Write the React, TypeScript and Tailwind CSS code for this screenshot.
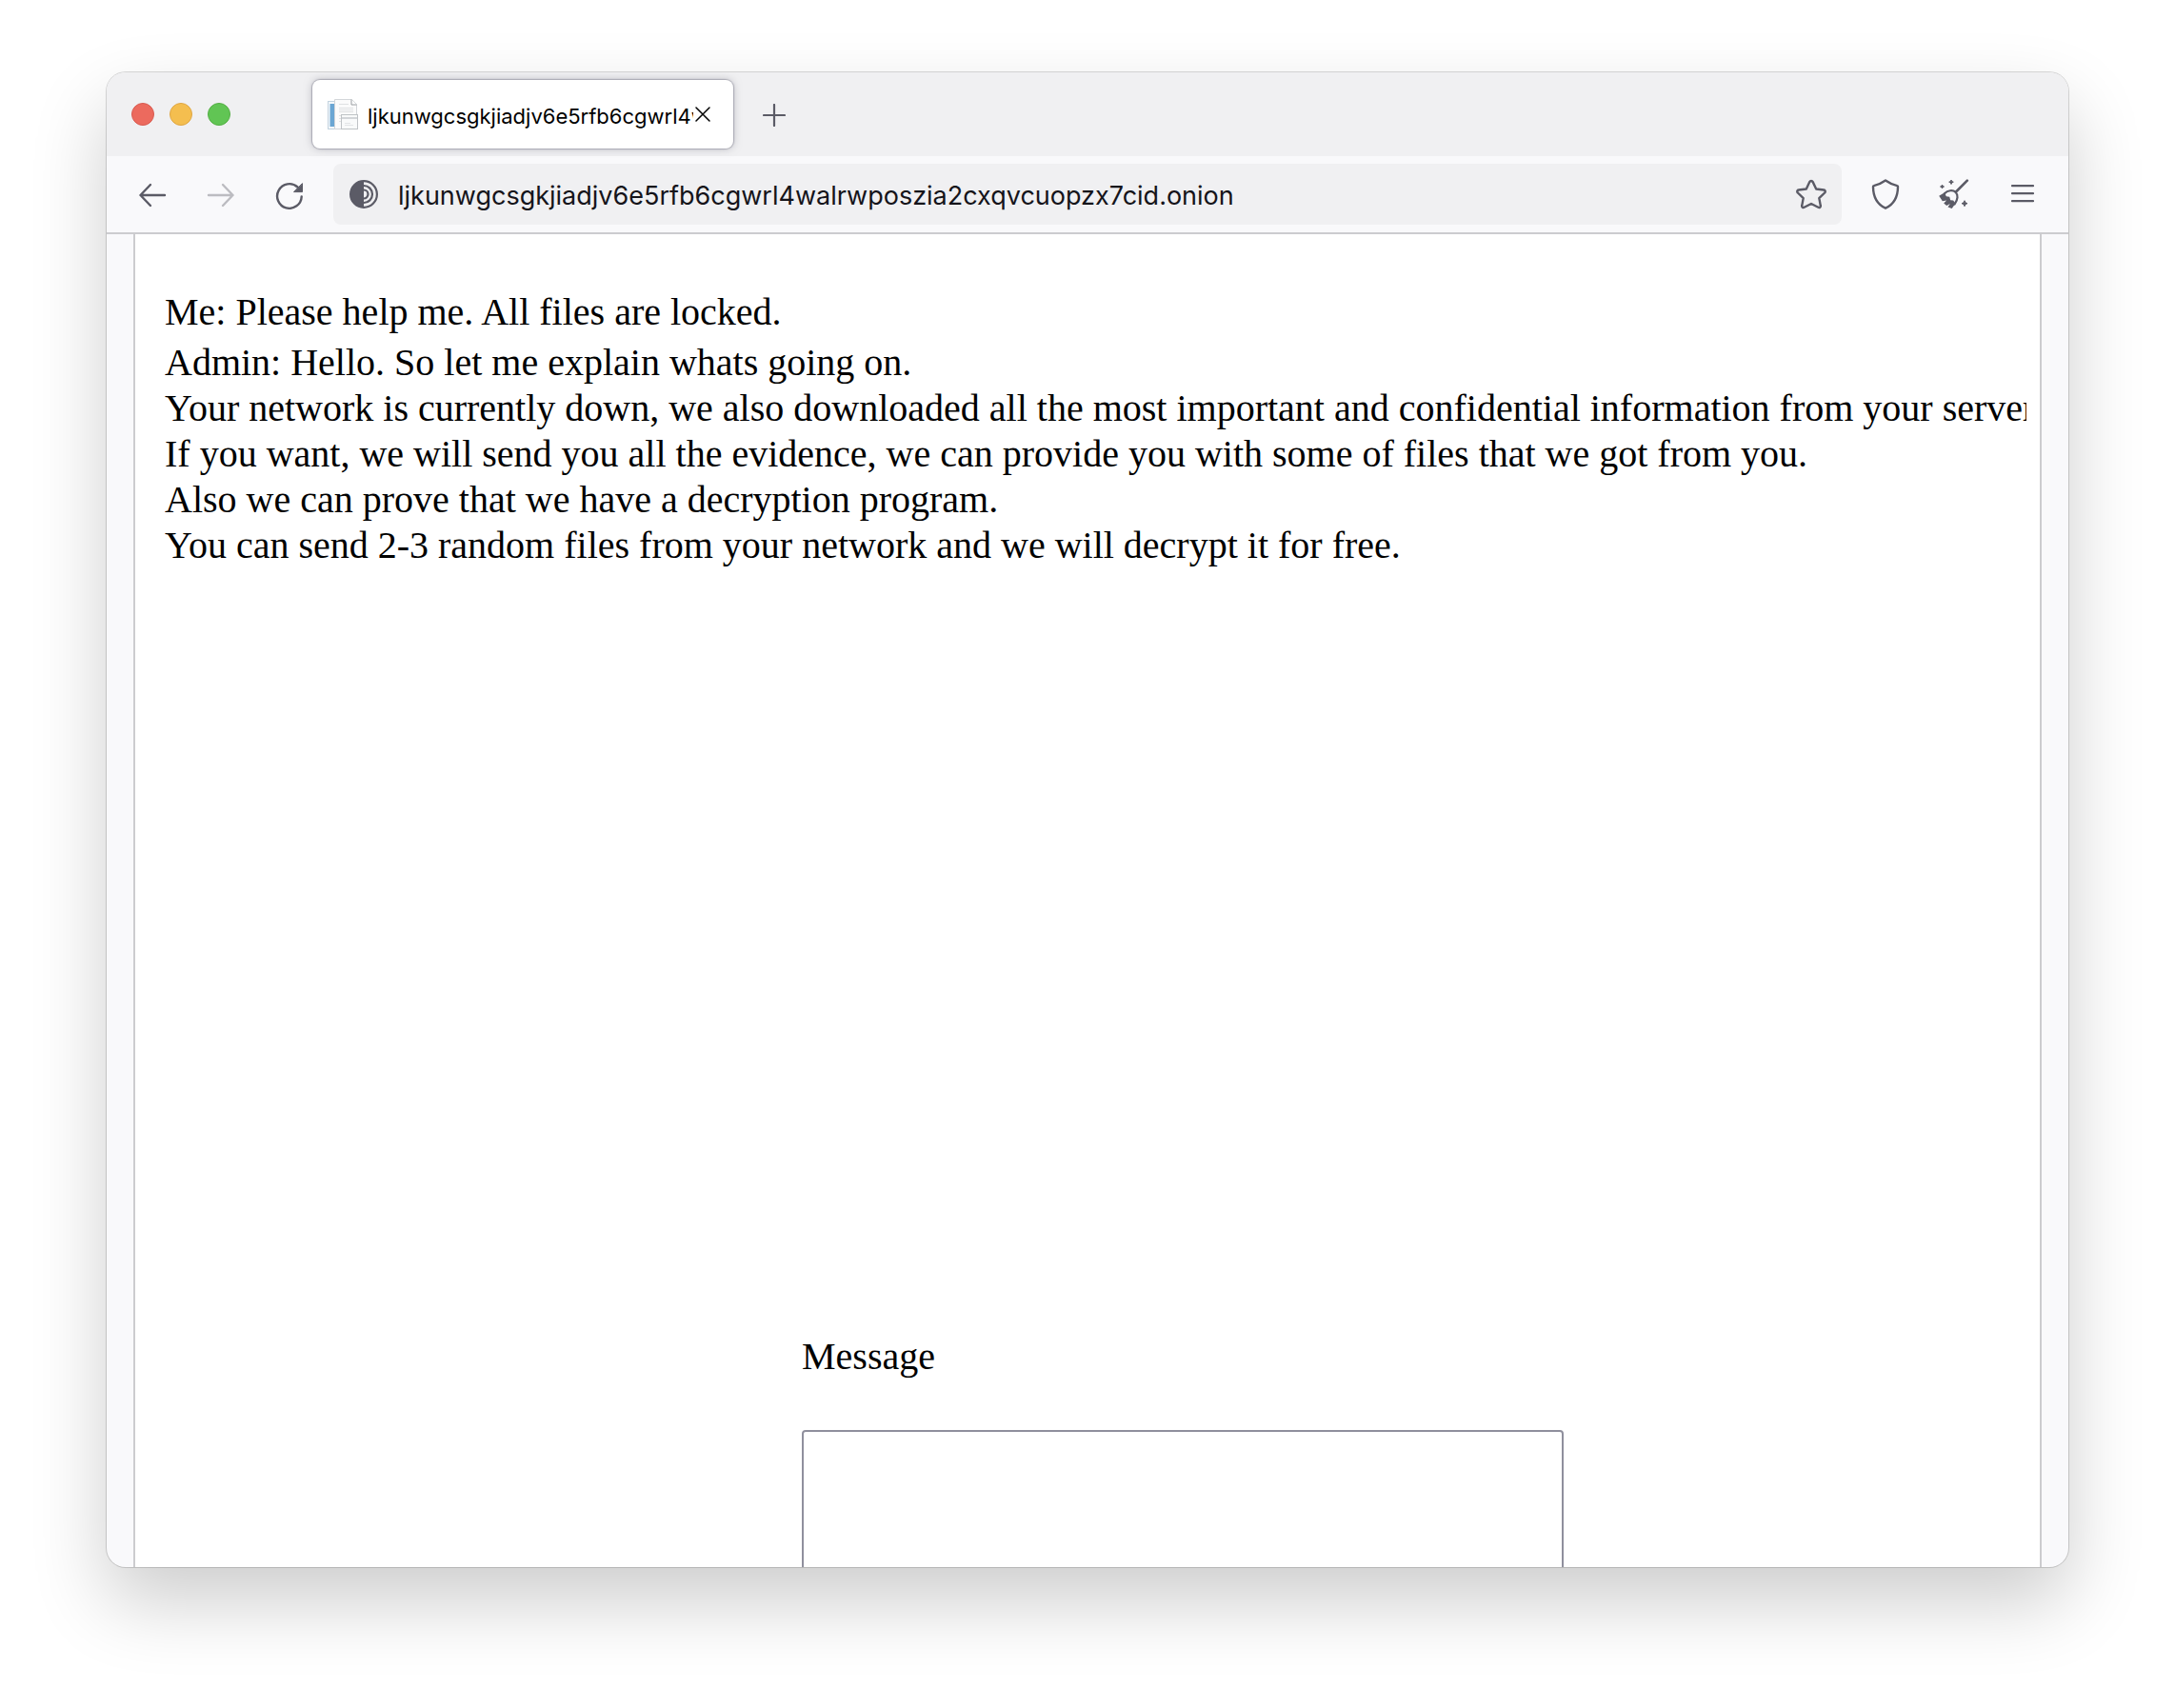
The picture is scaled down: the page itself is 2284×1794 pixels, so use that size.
const ADDRESS = "ljkunwgcsgkjiadjv6e5rfb6cgwrl4walrwposzia2cxqvcuopzx7cid.onion";

const ADMIN_LINES = [
  "Admin: Hello. So let me explain whats going on.",
  "Your network is currently down, we also downloaded all the most important and confidential information from your servers.",
  "If you want, we will send you all the evidence, we can provide you with some of files that we got from you.",
  "Also we can prove that we have a decryption program.",
  "You can send 2-3 random files from your network and we will decrypt it for free.",
];

const stroke = {
  fill: "none",
  stroke: "currentColor",
  strokeLinecap: "round",
  strokeLinejoin: "round",
} as const;

function BackIcon() {
  return (
    <svg className="size-8" viewBox="0 0 32 32" strokeWidth="2.4" {...stroke}>
      <path d="M29 17H3.500M14 6L3.500 17l10.500 11" />
    </svg>
  );
}

function ForwardIcon() {
  return (
    <svg className="size-8" viewBox="0 0 32 32" strokeWidth="2.4" {...stroke}>
      <path d="M3 17h25.500M18 6l10.500 11-10.500 11" />
    </svg>
  );
}

function ReloadIcon() {
  return (
    <svg className="size-8" viewBox="0 0 32 32" strokeWidth="2.400" {...stroke}>
      <path d="M28.700 18.500A12.800 12.800 0 1 1 24.500 8.500" />
      <path d="M29.500 5v8.600h-8.600z" fill="currentColor" strokeWidth="1" />
    </svg>
  );
}

function OnionIcon() {
  return (
    <svg className="size-8 shrink-0" viewBox="0 0 32 32" fill="none" stroke="currentColor" strokeWidth="2.2">
      <circle cx="16" cy="16" r="13.900" />
      <path d="M16 2a14 14 0 0 0 0 28z" fill="currentColor" stroke="none" />
      <path d="M16 7a9 9 0 0 1 0 18M16 11.500a4.500 4.500 0 0 1 0 9" />
    </svg>
  );
}

function StarIcon() {
  return (
    <svg className="size-8" viewBox="0 0 32 32" strokeWidth="2.4" {...stroke}>
      <path d="M14.300 3.100a1.900 1.900 0 0 1 3.400 0l3.500 7.400 8 1a1.700 1.700 0 0 1 .9 3l-5.800 5.600 1.500 8a1.600 1.600 0 0 1-2.400 1.700L16 26l-7.400 3.800a1.600 1.600 0 0 1-2.400-1.700l1.500-8-5.800-5.600a1.700 1.700 0 0 1 .9-3l8-1z" />
    </svg>
  );
}

function ShieldIcon() {
  return (
    <svg className="size-8" viewBox="0 0 32 32" strokeWidth="2.4" {...stroke}>
      <path d="M16 1.500c3.600 2.600 8 4.600 12.300 5.600.5.100.7.500.7.900 0 10.500-3.500 18.300-13 22.700C6.500 26.300 3 18.500 3 8c0-.4.200-.8.700-.9C8 6.100 12.400 4.100 16 1.500z" />
    </svg>
  );
}

function BroomIcon() {
  return (
    <svg className="size-8" viewBox="0 0 32 32" fill="currentColor">
      <path d="M29.800 1.700L18 13.500" fill="none" stroke="currentColor" strokeWidth="2.600" strokeLinecap="round" />
      <path
        d="M6 15.200c3.300-3.400 8.800-4 11.700-1.200 2.700 2.700 2.500 7.700-1.200 12.500"
        fill="none"
        stroke="currentColor"
        strokeWidth="2.200"
        strokeLinecap="round"
      />
      <path d="M.2 17.800L6 14.300l1.800 3.900 3.400.6 1 3.400 3 .4 2.200 3.200-3.700 5.200-4.200-1.400 2.300-3.600-3.600 2-3-2.500 2.900-3-4.300.8z" />
      <path
        d="M13 1l.7 1.500 1.600.7-1.600.7L13 5.500l-.7-1.600-1.600-.7 1.600-.7zM3.500 6l.6 1.400 1.400.6-1.400.6-.6 1.400-.6-1.400L1.500 8l1.400-.6zM27 22.700l.9 2.100 2.100.9-2.100.9-.9 2.100-.9-2.100-2.100-.9 2.100-.9z"
        stroke="currentColor"
        strokeWidth="1"
        strokeLinejoin="round"
      />
    </svg>
  );
}

function MenuIcon() {
  return (
    <svg className="size-8" viewBox="0 0 32 32" strokeWidth="2.2" {...stroke}>
      <path d="M5 7.200h22M5 15.200h22M5 23.200h22" />
    </svg>
  );
}

function PageIcon() {
  return (
    <svg className="size-8 shrink-0" viewBox="0 0 32 32">
      <rect x=".5" y="2.500" width="20" height="29" fill="#f4f8fb" stroke="#c3d3df" />
      <rect x="2.500" y="5" width="5.500" height="24" fill="#6ba6d3" />
      <path d="M7.500.5h18l5 5v26h-23z" fill="#fbfbfb" stroke="#d3d6d9" />
      <path d="M25 .5v5.500h5.500" fill="#fff" stroke="#9a9ea2" />
      <path d="M12 5.500h10M12 9.500h15M12 11.500h15M12 13.500h15M12 17.500h3M12 20.500h3M12 23.500h3" stroke="#dfe1e3" />
      <rect x="14.500" y="16.500" width="17" height="15" fill="#f9fafa" stroke="#bfc3c6" />
      <path d="M15 20h16" stroke="#d2d5d8" strokeWidth="2" />
      <path d="M18 25.500h6m-6 2h9" stroke="#e2e4e6" />
    </svg>
  );
}

export default function App() {
  return (
    <main className="flex h-screen flex-col bg-white px-28 pt-19 pb-37 text-black">
      <section className="flex min-h-0 flex-1 flex-col overflow-hidden rounded-[20px] bg-[#f9f9fb] font-['Inter',sans-serif] shadow-[0_0_0_1px_rgba(0,0,0,0.15),0_36px_80px_rgba(0,0,0,0.2)]">
        <header className="flex h-22 shrink-0 items-center bg-[#f0f0f2] pl-[26px]">
          <div className="flex gap-4">
            <button type="button" aria-label="Close window" className="size-6 rounded-full border border-[#d85a50] bg-[#ec6a5e]" />
            <button type="button" aria-label="Minimize window" className="size-6 rounded-full border border-[#dfa643] bg-[#f4be4f]" />
            <button type="button" aria-label="Zoom window" className="size-6 rounded-full border border-[#54ae44] bg-[#61c554]" />
          </div>
          <div className="ml-[86px] flex h-18 w-[442px] items-center rounded-lg bg-white pl-4 shadow-[0_0_1px_1px_rgba(128,128,142,0.5),0_0_8px_rgba(128,128,142,0.5)]">
            <PageIcon />
            <span className="ml-2.5 w-[342px] overflow-hidden pt-1 text-[22px] leading-8 whitespace-nowrap">{ADDRESS}</span>
            <button type="button" aria-label="Close tab" className="flex size-5 shrink-0 items-center justify-center">
              <svg className="size-4" viewBox="0 0 16 16" strokeWidth="1.500" {...stroke}>
                <path d="M1 1l14 14M15 1L1 15" />
              </svg>
            </button>
          </div>
          <button type="button" aria-label="New tab" className="ml-[27px] flex size-8 items-center justify-center pt-0.5 text-[#5b5b66]">
            <svg className="size-6" viewBox="0 0 24 24" strokeWidth="2.200" {...stroke}>
              <path d="M12 1v22M1 12h22" />
            </svg>
          </button>
        </header>

        <nav className="flex h-20 shrink-0 items-center px-4 text-[#5b5b66]">
          <div className="flex gap-2">
            <button type="button" aria-label="Back" className="flex h-16 w-16 items-center justify-center"><BackIcon /></button>
            <button type="button" aria-label="Forward" className="flex h-16 w-16 items-center justify-center text-[#bcbcc1]"><ForwardIcon /></button>
            <button type="button" aria-label="Reload" className="flex h-16 w-16 items-center justify-center"><ReloadIcon /></button>
          </div>
          <div className="mx-3.5 flex h-16 min-w-0 flex-1 items-center rounded-lg bg-[#f0f0f2] px-4">
            <OnionIcon />
            <input
              type="text"
              aria-label="Address"
              defaultValue={ADDRESS}
              className="ml-5 h-12 min-w-0 flex-1 bg-transparent pt-0.5 text-[27px] text-[#15141a] outline-none"
            />
            <button type="button" aria-label="Bookmark this page"><StarIcon /></button>
          </div>
          <div className="flex gap-2">
            <button type="button" aria-label="Security level" className="flex h-16 w-16 items-center justify-center"><ShieldIcon /></button>
            <button type="button" aria-label="New identity" className="flex h-16 w-16 items-center justify-center"><BroomIcon /></button>
            <button type="button" aria-label="Open menu" className="flex h-16 w-16 items-center justify-center"><MenuIcon /></button>
          </div>
        </nav>

        <div className="flex min-h-0 flex-1 border-t-2 border-[#cccccf] px-7">
          <div className="min-w-0 flex-1 overflow-hidden border-x-2 border-[#cccccf] bg-white font-['Liberation_Serif',serif] text-[40px] leading-12">
            <div className="mr-3.5 ml-[31px] flex h-[1115px] flex-col gap-[5px] overflow-hidden pt-[58px] whitespace-nowrap">
              <p>Me: Please help me. All files are locked.</p>
              <div>
                {ADMIN_LINES.map((line) => (
                  <p key={line}>{line}</p>
                ))}
              </div>
            </div>
            <form className="ml-[35%] w-2/5 pt-10">
              <label htmlFor="message" className="block">Message</label>
              <textarea id="message" className="mt-[53px] block h-[400px] w-full resize-none rounded border-2 border-[#8f8f9d] bg-white p-1 outline-none" />
            </form>
          </div>
        </div>
      </section>
    </main>
  );
}
